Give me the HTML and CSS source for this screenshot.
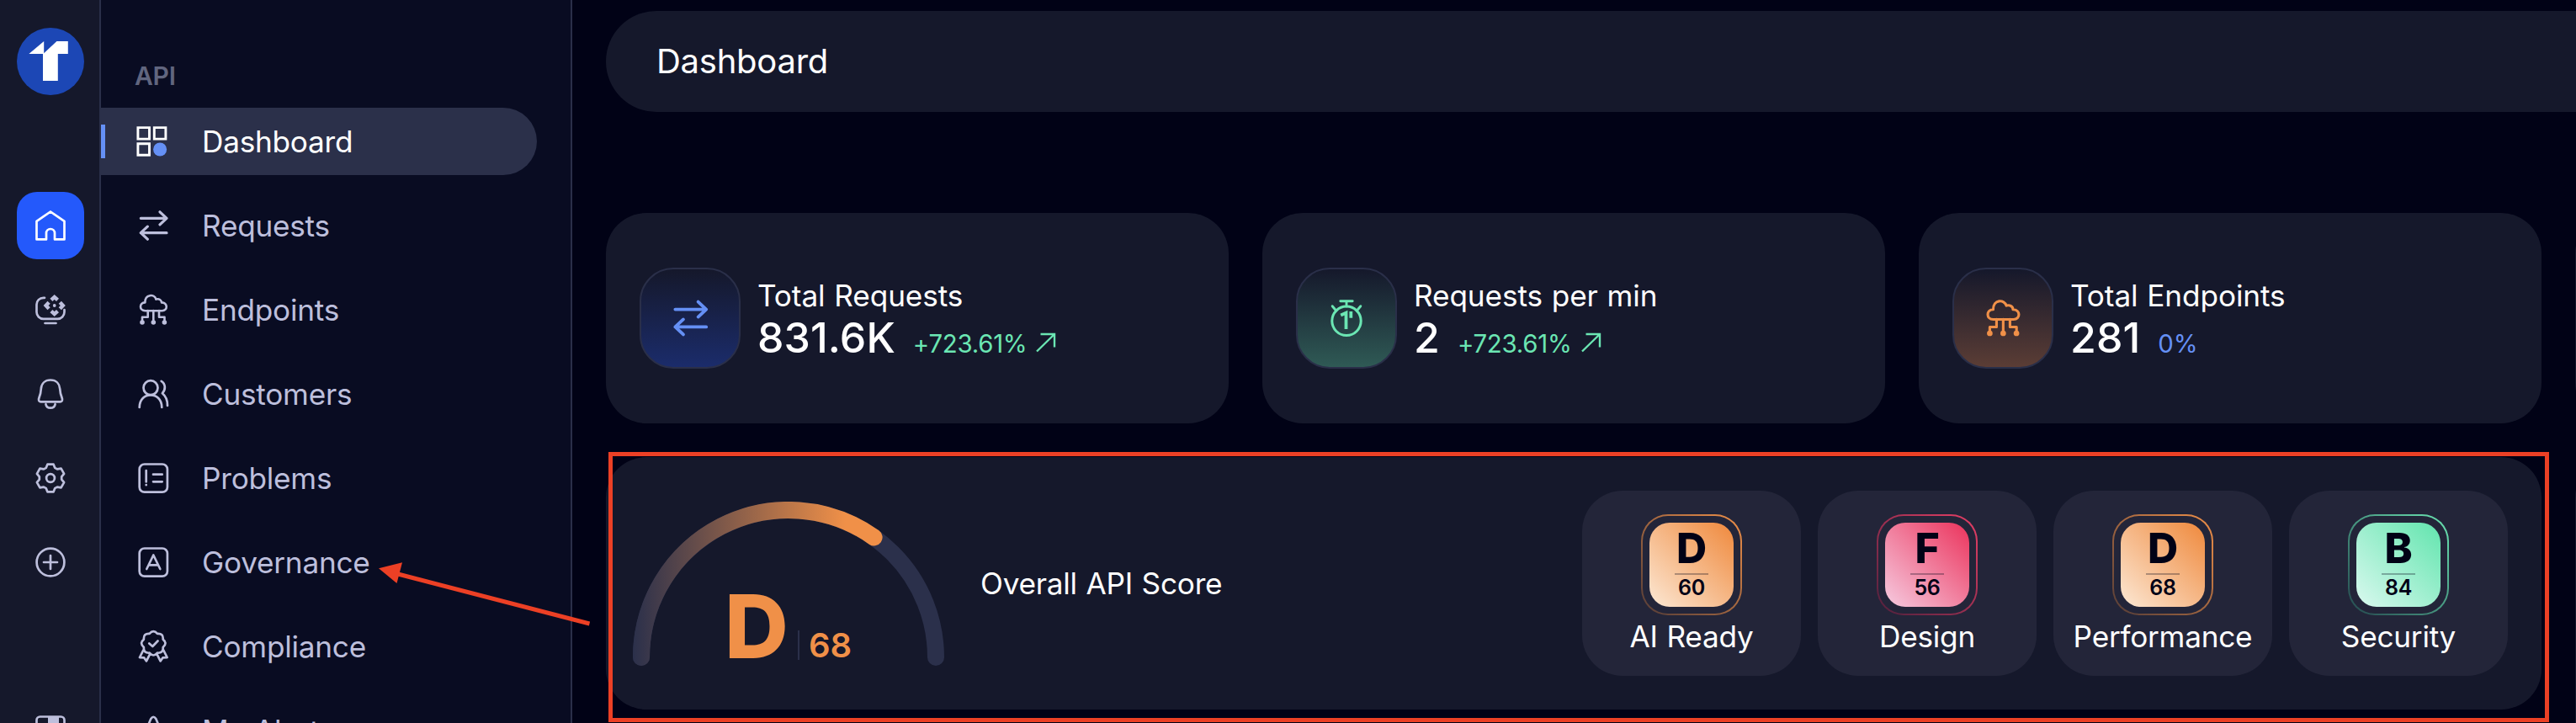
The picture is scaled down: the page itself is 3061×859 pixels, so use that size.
FILE: index.html
```html
<!DOCTYPE html>
<html lang="en">
<head>
<meta charset="utf-8">
<title>Dashboard</title>
<link rel="stylesheet" href="styles.css">
</head>
<body>
<svg class="defs" width="0" height="0" aria-hidden="true">
  <symbol id="swap" viewBox="0 0 40 40"><path d="M5.3 11.3H36M28 3.8l8 7.5-8 7.5M36 28.7H5.3M13.3 21.2l-8 7.5 8 7.5" stroke-width="3.2"/></symbol>
  <symbol id="cloud" viewBox="0 0 40 40">
    <path d="M10.5 21.2C3.2 21.2 3.2 11.6 10.4 11.4 10.2 1.2 21.6 1 23.4 7.6c3.6-1 6.6.8 6.6 3.8 7.6.2 7.6 9.8.6 9.8zM20.3 21v13M13.7 21v7.7H7V34M27 21v7.7h6.5V34" stroke-width="2.6"/>
    <g fill="currentColor" stroke="none"><circle cx="7" cy="35" r="2.8"/><circle cx="20.3" cy="35" r="2.8"/><circle cx="33.4" cy="35" r="2.8"/></g>
  </symbol>
</svg>
<div class="app">
  <aside class="rail">
    <svg class="logo" viewBox="0 0 80 80"><circle cx="40" cy="40" r="40" fill="#1c47b5"/><path fill="#fff" d="M14.4 31 32.2 16v14.3L47.4 16h13.4v15h-12v32H31V31z"/></svg>
    <nav class="rail-nav">
      <a class="rail-item current"><svg class="icon" viewBox="0 0 40 40"><path d="M20 3.5 3.5 14.8V36.4H15V29a5 5 0 0 1 10 0v7.4h11.5V14.8z"/></svg></a>
      <a class="rail-item"><svg class="icon" viewBox="0 0 40 40"><path d="M13 5.8h-1.5a8 8 0 0 0-8 8v9a8 8 0 0 0 8 8h17a8 8 0 0 0 8-8V20M13.5 36h13"/><path class="chevrons" d="M20.9 8.4 24.7 4.9l3.8 3.5M20.9 21.6l3.8 3.5 3.8-3.5M18.1 11.2 14.6 15l3.5 3.8M31.3 11.2l3.5 3.8-3.5 3.8"/><circle cx="24.7" cy="15" r="1.9" fill="currentColor" stroke="none"/></svg></a>
      <a class="rail-item"><svg class="icon" viewBox="0 0 40 40"><path d="M20 3.5c-7 0-10.800 4.700-11.200 10.500-.3 5-1 7.500-2.300 10.400-1.300 3-.2 4.900 1.800 4.900h23.400c2 0 3.100-1.900 1.800-4.900-1.300-2.900-2-5.400-2.300-10.400C30.800 8.200 27 3.500 20 3.500zM14.400 32.200c1.200 6 10 6 11.200 0"/></svg></a>
      <a class="rail-item"><svg class="icon" viewBox="0 0 40 40"><path d="M16.400 3.700h7.200l1.600 4.100 2.800 1.600 4.600-.8 3.500 6.200-2.900 3.600v3.200l2.900 3.600-3.500 6.200-4.600-.8-2.800 1.600-1.600 4.100h-7.200l-1.600-4.100-2.800-1.600-4.600.8-3.500-6.200 2.900-3.600v-3.200l-2.900-3.600 3.500-6.200 4.600.8 2.800-1.600z"/><circle cx="20" cy="20" r="4.900"/></svg></a>
      <a class="rail-item"><svg class="icon" viewBox="0 0 40 40"><circle cx="20" cy="20" r="16.400"/><path d="M12 20h16M20 12v16"/></svg></a>
      <a class="rail-item rail-end"><svg class="icon" viewBox="0 0 40 40"><rect x="3.500" y="3.500" width="33" height="33" rx="4"/><path fill="currentColor" stroke="none" d="M17 3h13v34H17z"/></svg></a>
    </nav>
  </aside>

  <aside class="sidebar">
    <div class="section">API</div>
    <nav class="menu">
      <a class="menu-item active"><svg class="icon" viewBox="0 0 40 40"><path class="sharp" d="M1.900 3.600h13.600v13.500H1.900zM21.300 3.600h13.600v13.500H21.300zM1.900 22.700h13.600v13.500H1.900z"/><circle cx="28.100" cy="29.500" r="8" fill="#6590f5" stroke="none"/></svg><span>Dashboard</span></a>
      <a class="menu-item"><svg class="icon"><use href="#swap"/></svg><span>Requests</span></a>
      <a class="menu-item"><svg class="icon"><use href="#cloud"/></svg><span>Endpoints</span></a>
      <a class="menu-item"><svg class="icon" viewBox="0 0 40 40"><circle cx="17" cy="12.700" r="8.500"/><path d="M3.700 36c0-19.500 26.600-19.500 26.600 0M29.700 4.800c5.200 3.200 5.400 10.400 1.200 14.400 3.600 3 6.300 7.800 6.100 14.800"/></svg><span>Customers</span></a>
      <a class="menu-item"><svg class="icon" viewBox="0 0 40 40"><rect x="3.700" y="3.500" width="33.200" height="33.200" rx="6"/><path d="M11.700 11v13.500M11.700 28v.2M20 15.700h10.700M20 24.300h10.700"/></svg><span>Problems</span></a>
      <a class="menu-item"><svg class="icon" viewBox="0 0 40 40"><rect x="3.700" y="3.500" width="33.200" height="33.200" rx="6"/><path d="m12.300 28 8-16.500 8 16.500M15 23.300h10.600"/></svg><span>Governance</span></a>
      <a class="menu-item"><svg class="icon" viewBox="0 0 40 40"><path d="M15.600 4.900q4.700-5.600 9.400 0 7.300-.6 6.700 6.700 5.600 4.700 0 9.400.6 7.300-6.700 6.700-4.700 5.600-9.400 0-7.300.6-6.700-6.700-5.600-4.700 0-9.400-.6-7.300 6.700-6.700zM15.300 16.500l4 3.500 6.200-6.500M8.300 24.500l-4.300 8.600 5.200.3 2.800 4 4.300-8.600M32.300 24.500l4.300 8.600-5.200.3-2.800 4-4.300-8.600"/></svg><span>Compliance</span></a>
      <a class="menu-item"><svg class="icon" viewBox="0 0 40 40"><path d="M5 35 17.300 6q3-4.500 6 0L35.500 35z"/></svg><span>My Alerts</span></a>
    </nav>
  </aside>

  <main class="main">
    <header class="topbar"><h1>Dashboard</h1></header>
    <section class="stats">
      <article class="card stat">
        <div class="tile blue"><svg class="icon large"><use href="#swap"/></svg></div>
        <div class="stat-body"><div class="label">Total Requests</div><div class="figures"><span class="value">831.6K</span><span class="delta up">+723.61%</span><svg class="trend" viewBox="0 0 24 24"><path d="M1 22.500 22 2M5.500 2H22v15.500"/></svg></div></div>
      </article>
      <article class="card stat">
        <div class="tile green"><svg class="icon large" viewBox="0 0 48 48"><circle cx="24" cy="27.300" r="17.200"/><path class="sharp" d="M16.800 3.700h14.400M24 3.700V10M7.200 9.700l4.600 5.500M40.800 9.700l-4.600 5.500"/><path class="count" d="M17.200 20.500l6.300-2.800V37M29.300 16v7.800"/></svg></div>
        <div class="stat-body"><div class="label">Requests per min</div><div class="figures"><span class="value">2</span><span class="delta up">+723.61%</span><svg class="trend" viewBox="0 0 24 24"><path d="M1 22.500 22 2M5.500 2H22v15.500"/></svg></div></div>
      </article>
      <article class="card stat">
        <div class="tile orange"><svg class="icon large"><use href="#cloud"/></svg></div>
        <div class="stat-body"><div class="label">Total Endpoints</div><div class="figures"><span class="value">281</span><span class="delta flat">0%</span></div></div>
      </article>
      <article class="card stat"></article>
    </section>
    <section class="scores">
      <article class="card overall">
        <div class="gauge">
          <svg class="arc" viewBox="0 0 370 195">
            <defs><linearGradient id="fade" gradientUnits="userSpaceOnUse" x1="0" y1="0" x2="253" y2="0"><stop offset="0" stop-color="#2b304b"/><stop offset="1" stop-color="#f09048"/></linearGradient></defs>
            <path d="M10 185a175 175 0 0 1 350 0" stroke="#2b304b"/>
            <path d="M10 185A175 175 0 0 1 286.600 42.500" stroke="url(#fade)"/>
          </svg>
          <div class="grade"><span class="grade-letter">D</span><span class="grade-number">68</span></div>
        </div>
        <div class="overall-label">Overall API Score</div>
        <div class="breakdown">
          <div class="part d"><div class="ring"><div class="badge"><b>D</b><i></i><span>60</span></div></div><div class="part-label">AI Ready</div></div>
          <div class="part f"><div class="ring"><div class="badge"><b>F</b><i></i><span>56</span></div></div><div class="part-label">Design</div></div>
          <div class="part d"><div class="ring"><div class="badge"><b>D</b><i></i><span>68</span></div></div><div class="part-label">Performance</div></div>
          <div class="part b"><div class="ring"><div class="badge"><b>B</b><i></i><span>84</span></div></div><div class="part-label">Security</div></div>
        </div>
      </article>
      <article class="card more"></article>
    </section>
  </main>
  <div class="highlight"></div>
  <svg class="pointer" viewBox="0 0 260 90"><path d="M259.500 78 30 18.500" stroke="#ec4025" stroke-width="5"/><path d="m9 12.300 28-7L30.500 30z" fill="#ec4025"/></svg>
</div>
</body>
</html>
```
FILE: styles.css
```css
* { box-sizing: border-box; }
body {
  margin: 0;
  background: #010216;
  color: #fff;
  font-family: Inter, "Liberation Sans", sans-serif;
  font-size: 35.2px;
  font-weight: 400;
  line-height: 44px;
  letter-spacing: -0.007em;
  word-spacing: 1px;
}
.defs { position: absolute; }
.app {
  position: relative;
  display: flex;
  width: 3061px;
  height: 859px;
  overflow: hidden;
}
.icon {
  flex: none;
  display: block;
  width: 40px;
  height: 40px;
  fill: none;
  stroke: currentColor;
  stroke-width: 2.7;
  stroke-linecap: round;
  stroke-linejoin: round;
}
.icon.large { width: 48px; height: 48px; stroke-width: 3; }
.sharp { stroke-linejoin: miter; stroke-width: 2.9; }
.count { stroke-linejoin: miter; stroke-linecap: butt; stroke-width: 3.8; }
.chevrons { stroke-width: 4.4; stroke-linecap: butt; stroke-linejoin: miter; }

/* Icon rail */
.rail {
  flex: none;
  width: 120px;
  padding-top: 33px;
  background: #15182b;
  border-right: 2px solid #2a2f49;
  color: #bdbfdc;
}
.logo { display: block; width: 80px; height: 80px; margin: 0 0 115px 19.500px; }
.rail-nav { display: flex; flex-direction: column; gap: 20px; padding-left: 20px; }
.rail-item {
  display: flex;
  align-items: center;
  justify-content: center;
  width: 80px;
  height: 80px;
  border-radius: 24px;
}
.rail-item.current { background: #2459fb; color: #fff; }

.rail-end { margin-top: 100px; }

/* Section menu */
.sidebar {
  flex: none;
  width: 560px;
  padding: 70px 40px 0 0;
  background: #090c22;
  border-right: 2px solid #2a2f49;
}
.section {
  height: 58px;
  padding-left: 40px;
  color: #61667f;
  font-size: 30px;
  font-weight: 600;
  line-height: 41px;
}
.menu { display: flex; flex-direction: column; gap: 20px; }
.menu-item {
  position: relative;
  display: flex;
  align-items: center;
  gap: 38px;
  height: 80px;
  padding-left: 42px;
  border-radius: 0 40px 40px 0;
  color: #bdbfdc;
}
.menu-item.active { background: #2b304a; color: #fff; }
.menu-item.active::before {
  content: "";
  position: absolute;
  left: 0;
  top: 20px;
  width: 5px;
  height: 40px;
  background: #6590f5;
}

/* Content */
.main { flex: none; width: 2381px; padding: 13px 0 0 40px; }
.topbar {
  display: flex;
  align-items: center;
  height: 120px;
  margin-bottom: 120px;
  padding-left: 60px;
  border-radius: 60px 0 0 60px;
  background: #15182b;
}
.topbar h1 { margin: 0; font-size: 40px; font-weight: 400; line-height: 48px; }
.card { flex: none; border-radius: 48px; background: #15182b; }
.stats, .scores { display: flex; gap: 40px; }
.stats { margin-bottom: 40px; }
.stat {
  display: flex;
  align-items: center;
  gap: 20px;
  width: 740px;
  height: 250px;
  padding: 2px 40px 0;
}
.tile {
  display: flex;
  align-items: center;
  justify-content: center;
  width: 120px;
  height: 120px;
  margin-top: -2px;
  border: 2px solid #2a2f49;
  border-radius: 40px;
}
.tile.blue { color: #6590f5; background: linear-gradient(#15182b, #1b2c6b); }
.tile.green { color: #6be6b3; background: linear-gradient(#15182b, #2f5a55); }
.tile.orange { color: #f09048; background: linear-gradient(#15182b, #5b3d35); }
.label { letter-spacing: -0.003em; }
.figures { display: flex; align-items: baseline; height: 56px; line-height: 56px; }
.value { margin-right: 21px; font-size: 50px; font-weight: 500; letter-spacing: 0.002em; }
.delta { font-size: 29.4px; }
.up, .trend { color: #6be6b3; }
.flat { color: #6590f5; }
.trend { width: 24px; height: 24px; margin-left: 11px; fill: none; stroke: currentColor; stroke-width: 2.4; }

/* Score summary */
.overall { display: flex; align-items: center; width: 2300px; height: 300px; padding: 0 40px 0 32px; }
.gauge { display: flex; flex-direction: column; width: 370px; height: 195px; margin-right: 43px; }
.arc { display: block; width: 370px; height: 195px; fill: none; stroke-width: 20; stroke-linecap: round; }
.grade { display: flex; align-items: flex-end; height: 84px; margin: -91px 0 7px 109px; color: #f09048; letter-spacing: 0; }
.grade-letter { height: 84px; margin-right: 11px; font-size: 105px; font-weight: 800; line-height: 88px; }
.grade-number {
  height: 35px;
  padding-left: 11px;
  border-left: 2px solid #2b304a;
  font-size: 40px;
  font-weight: 600;
  line-height: 35px;
}
.breakdown { display: flex; gap: 20px; margin-left: auto; }
.part {
  display: flex;
  flex-direction: column;
  align-items: center;
  width: 260px;
  height: 220px;
  padding-top: 28px;
  border-radius: 48px;
  background: #232539;
}
.ring {
  width: 120px;
  height: 120px;
  padding: 8px;
  border: 2px solid transparent;
  border-radius: 32px;
}
.badge {
  display: flex;
  flex-direction: column;
  align-items: center;
  width: 100px;
  height: 100px;
  padding-top: 2px;
  border-radius: 24px;
  color: #010216;
}
.badge b { font-size: 50px; font-weight: 800; line-height: 56px; }
.badge i { width: 40px; height: 2px; margin-top: 2px; background: rgba(1, 2, 22, 0.3); }
.badge span { font-size: 25px; font-weight: 600; line-height: 31px; }
.part-label { margin-top: 3px; }
.part.d .ring { background: linear-gradient(#232539, #232539) padding-box, linear-gradient(45deg, #543c37, #f09048) border-box; }
.part.f .ring { background: linear-gradient(#232539, #232539) padding-box, linear-gradient(45deg, #4f203c, #ea3f66) border-box; }
.part.b .ring { background: linear-gradient(#232539, #232539) padding-box, linear-gradient(45deg, #24484e, #6be6b3) border-box; }
.part.d .badge { background: linear-gradient(45deg, #fce8d4, #f09048 92%); }
.part.f .badge { background: linear-gradient(45deg, #f6cbe0, #ec3f66 92%); }
.part.b .badge { background: linear-gradient(45deg, #daf9ef, #6be6b3 92%); }
.more { width: 740px; height: 400px; }

/* Annotations over the page */
.highlight {
  position: absolute;
  left: 723px;
  top: 537px;
  width: 2306px;
  height: 321px;
  border: 5px solid #ec4025;
}
.pointer { position: absolute; left: 441px; top: 663px; width: 260px; height: 90px; }
```
